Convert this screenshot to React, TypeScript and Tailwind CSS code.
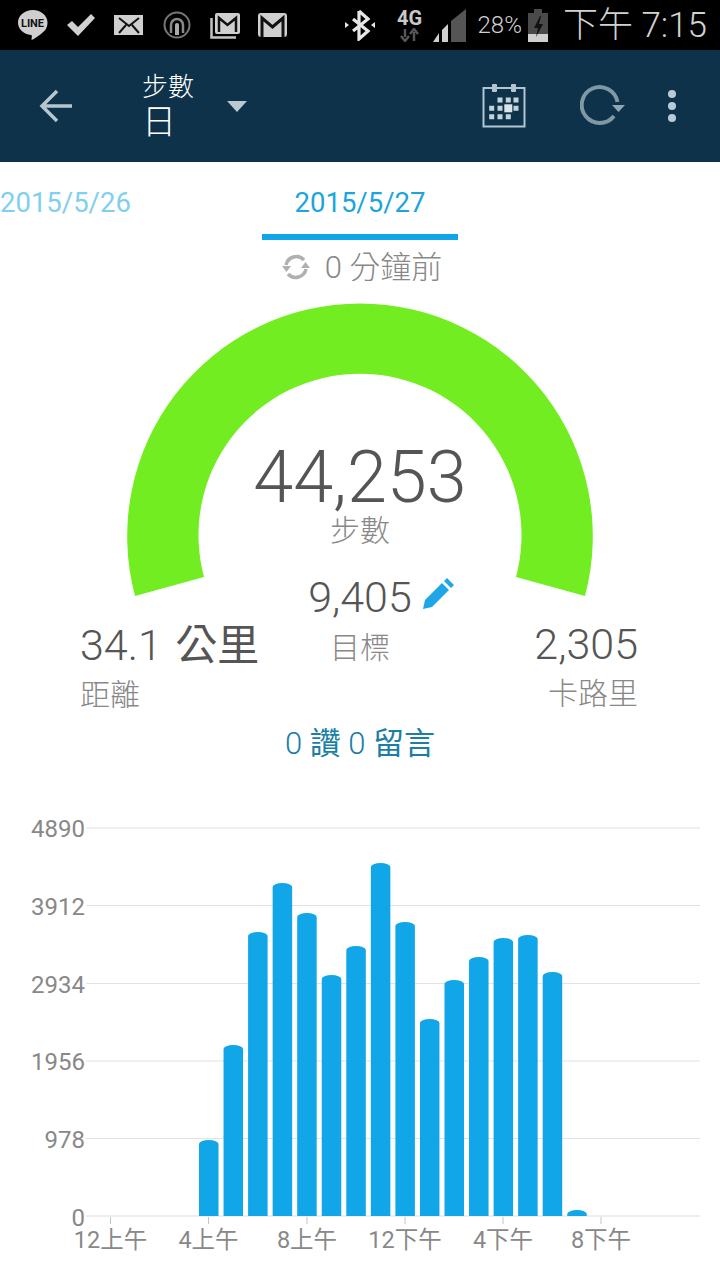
const hourly = [
  { hour: 4, top: 1140 },
  { hour: 5, top: 1045 },
  { hour: 6, top: 932 },
  { hour: 7, top: 883 },
  { hour: 8, top: 913 },
  { hour: 9, top: 975 },
  { hour: 10, top: 946 },
  { hour: 11, top: 863 },
  { hour: 12, top: 922 },
  { hour: 13, top: 1019 },
  { hour: 14, top: 980 },
  { hour: 15, top: 957 },
  { hour: 16, top: 938 },
  { hour: 17, top: 935 },
  { hour: 18, top: 972 },
  { hour: 19, top: 1210 },
]

const yLabels = [
  { text: "4890", y: 828 },
  { text: "3912", y: 905.5 },
  { text: "2934", y: 983.5 },
  { text: "1956", y: 1061 },
  { text: "978", y: 1138.5 },
]

const xLabels = [
  { text: "12上午", x: 110.5 },
  { text: "4上午", x: 208.5 },
  { text: "8上午", x: 307 },
  { text: "12下午", x: 405 },
  { text: "4下午", x: 503 },
  { text: "8下午", x: 601 },
]

const StatusIcons = () => (
  <div className="flex items-center">
    <svg width="32" height="32" viewBox="0 0 32 32" className="ml-[17px]">
      <path d="M16 1C7.5 1 1 6.6 1 13.6c0 6.6 5.8 11.7 13 12.5 1 .2.9 1 .8 2l-.3 3c2.8-1.4 11.5-7 14-10.4 1.2-1.8 2-4.400 2-7.100C30.500 6.600 24 1 16 1z" fill="#cfcfcf" />
      <text x="15.500" y="17.500" textAnchor="middle" fontSize="11" fontWeight="700" fill="#111">LINE</text>
    </svg>
    <svg width="32" height="26" viewBox="0 0 32 26" className="ml-[16px]">
      <path d="M2 13l5-4 6 6L26 2l4 4-17 18z" fill="#d0d0d0" />
    </svg>
    <svg width="30" height="21" viewBox="0 0 30 21" className="ml-[17px]">
      <rect width="29" height="20" fill="#cfcfcf" />
      <path d="M5 3l10 8 10-8M5 18l7-8M25 18l-7-8" fill="none" stroke="#111" strokeWidth="2" />
    </svg>
    <svg width="28" height="28" viewBox="0 0 28 28" className="ml-[19px]">
      <circle cx="14" cy="14" r="12.500" fill="none" stroke="#777" strokeWidth="2" />
      <path d="M8 22v-8a6 6 0 0112 0v8" fill="none" stroke="#888" strokeWidth="2.500" />
      <path d="M12 24v-10a2 2 0 014 0v10z" fill="#aaa" />
    </svg>
    <svg width="31" height="27" viewBox="0 0 31 27" className="ml-[19px]">
      <path d="M1.500 6v19.500H26" fill="none" stroke="#c4c4c4" strokeWidth="2.500" />
      <rect x="5" y="1" width="25" height="21" rx="2" fill="#cfcfcf" />
      <path d="M9 20V6l8.500 7L26 6v14" fill="none" stroke="#111" strokeWidth="2.500" />
    </svg>
    <svg width="29" height="24" viewBox="0 0 29 24" className="ml-[17px]">
      <rect width="29" height="24" rx="3" fill="#cfcfcf" />
      <path d="M4 24V5l10.500 9L25 5v19" fill="none" stroke="#111" strokeWidth="3" />
    </svg>
  </div>
)

const StatusRight = () => (
  <div className="flex items-center">
    <svg width="32" height="32" viewBox="0 0 32 32">
      <path d="M15 2v28l9-8-15-12M15 2l9 8-15 12" fill="none" stroke="#e6e6e6" strokeWidth="3.200" />
      <path d="M1 13l4 3-4 3zM31 13l-4 3 4 3z" fill="#e6e6e6" />
    </svg>
    <div className="ml-[20px] flex w-[28px] flex-col items-center">
      <span className="text-[20px] leading-[20px] font-bold text-[#c8c8c8]">4G</span>
      <svg width="20" height="14" viewBox="0 0 20 14">
        <path d="M5 1v8M1 8l4 5 4-5" fill="none" stroke="#555" strokeWidth="2.500" />
        <path d="M14 13V4M10 6l4-5 4 5" fill="none" stroke="#555" strokeWidth="2.500" />
      </svg>
    </div>
    <svg width="33" height="33" viewBox="0 0 33 33" className="ml-[9px]">
      <path d="M33 0v33H18V12z" fill="#555" />
      <path d="M15 15v18H9V21z" fill="#cfcfcf" />
      <path d="M6 24v9H0z" fill="#cfcfcf" />
    </svg>
    <span className="ml-[12px] text-[24px] leading-none font-light text-[#cfcfcf]">28%</span>
    <svg width="20" height="33" viewBox="0 0 20 33" className="ml-[6px]">
      <path d="M6 0h8v4h6v29H0V4h6z" fill="#4a4a4a" />
      <path d="M0 25h20v8H0z" fill="#cfcfcf" />
      <path d="M12 7l-6 12h4l-2 9 7-13h-4l2-8z" fill="#111" />
    </svg>
    <span className="ml-[15px] mr-[13px] text-[35px] leading-none font-light whitespace-nowrap text-[#d2d2d2]">下午 7:15</span>
  </div>
)

const HeaderBar = () => (
  <div className="flex h-[112px] items-center bg-[#0d3249]">
    <svg width="34" height="34" viewBox="0 0 34 34" className="ml-[39px]">
      <path d="M33 17H3M18 2L3 17l15 15" fill="none" stroke="#b5c6d0" strokeWidth="3.500" />
    </svg>
    <div className="ml-[69px] flex w-[62px] flex-col text-white">
      <span className="text-[26px] leading-[32px] font-light">步數</span>
      <span className="text-[34px] leading-[38px] font-light">日</span>
    </div>
    <svg width="20" height="11" viewBox="0 0 20 11" className="ml-[23px]">
      <path d="M0 0h20L10 11z" fill="#b9c8d1" />
    </svg>
    <svg width="44" height="44" viewBox="0 0 44 44" className="ml-auto">
      <rect x="1.500" y="4" width="41" height="38.500" fill="none" stroke="#b4c5cf" strokeWidth="2" />
      <rect x="10" y="0" width="5" height="8" rx="1" fill="#b4c5cf" />
      <rect x="29" y="0" width="5" height="8" rx="1" fill="#b4c5cf" />
      <path d="M15.500 13.500h5v5h-5zM23.800 13.500h5v5h-5zM31.500 13.500h5v5h-5zM7.200 21.800h5v5h-5zM15.500 21.800h5v5h-5zM31.500 21.800h5v5h-5zM7.200 30.200h5v5h-5zM15.500 30.200h5v5h-5zM23.800 30.200h5v5h-5z" fill="#c3d3dc" />
      <rect x="22.300" y="20.300" width="8" height="8" fill="#dbe5ea" />
    </svg>
    <svg width="46" height="44" viewBox="0 0 46 44" className="ml-[54px]">
      <path d="M34 32A18 18 0 1 1 37.500 18" fill="none" stroke="#7f98a6" strokeWidth="4" />
      <path d="M32 21h13l-6.500 7z" fill="#8ea5b2" />
    </svg>
    <div className="mr-[44px] ml-[42px] flex flex-col gap-[4px]">
      <span className="size-[8px] rounded-full bg-[#b9cbd6]" />
      <span className="size-[8px] rounded-full bg-[#b9cbd6]" />
      <span className="size-[8px] rounded-full bg-[#b9cbd6]" />
    </div>
  </div>
)

const DateTabs = () => (
  <div className="flex h-[78px] text-[27.5px]">
    <div className="w-[262px] pt-[23px] leading-[36px] text-[#7fd0ee]">2015/5/26</div>
    <div className="w-[196px] border-b-[6px] border-[#10a5e8] pt-[23px] text-center leading-[36px] text-[#1ca5dc]">2015/5/27</div>
  </div>
)

const SyncStatus = () => (
  <div className="flex h-[54px] items-center justify-center pl-[4px] text-[31px] font-light text-[#888]">
    <svg width="28" height="28" viewBox="0 0 28 28" className="mr-[15px]">
      <path d="M4 12a10.500 10.500 0 0118-5M24 16a10.500 10.500 0 01-18 5" fill="none" stroke="#b0b0b0" strokeWidth="3.500" />
      <path d="M0 13h9l-4.500 6zM19 15h9l-4.500-6z" fill="#b0b0b0" />
    </svg>
    <span className="pt-[2px]">0 分鐘前</span>
  </div>
)

const Gauge = () => (
  <svg width="464" height="294" viewBox="0 0 464 294" className="absolute top-[9px] left-[128px] overflow-visible">
    <path d="M7 293A232.800 232.800 0 1 1 457 293L388 274A161.500 161.500 0 1 0 76 274Z" fill="#72ed22" />
  </svg>
)

const Summary = () => (
  <div className="relative h-[508px]">
    <Gauge />
    <div className="relative flex flex-col items-center pt-[142px]">
      <div className="text-[72px] leading-[84px] font-light text-[#555]">44,253</div>
      <div className="mt-[-7px] text-[30px] leading-[36px] font-light text-[#888]">步數</div>
    </div>
    <div className="relative mt-[23px] grid grid-cols-[1fr_auto_1fr] px-[80px]">
      <div className="pt-[49px]">
        <div className="text-[43px] leading-[48px] font-light whitespace-nowrap text-[#555]">
          34.1 <span className="ml-[3px] text-[42px] font-normal">公里</span>
        </div>
        <div className="text-[30px] leading-[50px] font-light text-[#888]">距離</div>
      </div>
      <div className="flex flex-col items-center">
        <div className="relative text-[43px] leading-[50px] font-light text-[#555]">
          9,405
          <svg width="32" height="32" viewBox="0 0 32 32" className="absolute top-[6px] left-[calc(100%+10px)]">
            <path d="M1 31l2-9L20 5l7 7L10 29zM22 3l3-3 7 7-3 3z" fill="#1da7e6" />
          </svg>
        </div>
        <div className="text-[30px] leading-[51px] font-light text-[#888]">目標</div>
      </div>
      <div className="pt-[48px] pr-[2px] text-right">
        <div className="text-[43px] leading-[49px] font-light whitespace-nowrap text-[#555]">2,305</div>
        <div className="text-[30px] leading-[50px] font-light text-[#888]">卡路里</div>
      </div>
    </div>
    <div className="pt-[2px] text-center text-[31px] leading-[44px] font-light text-[#1b7ea6]">
      0 <span className="font-normal">讚</span> 0 <span className="font-normal">留言</span>
    </div>
  </div>
)

const Chart = () => (
  <svg width="720" height="478" viewBox="0 802 720 478" className="block">
    {yLabels.map(l => (
      <g key={l.text}>
        <line x1="86" x2="700" y1={l.y} y2={l.y} stroke="#e2e2e2" strokeWidth="1.200" />
        <text x="85" y={l.y + 9} textAnchor="end" fontSize="24" fill="#888">{l.text}</text>
      </g>
    ))}
    <line x1="86" x2="700" y1="1216" y2="1216" stroke="#eeeeee" strokeWidth="2" />
    <text x="85" y="1226" textAnchor="end" fontSize="24" fill="#888">0</text>
    {hourly.map(b => {
      const x = 208.5 + (b.hour - 4) * 24.55 - 9.5
      return (
        <path
          key={b.hour}
          d={`M${x} 1216V${b.top + 4}A9.750 4 0 0 1 ${x + 19.5} ${b.top + 4}V1216Z`}
          fill="#10a6e8"
        />
      )
    })}
    {xLabels.map(l => (
      <g key={l.text}>
        <line x1={l.x} x2={l.x} y1="1217" y2="1224" stroke="#c4c4c4" />
        <text x={l.x} y="1248" textAnchor="middle" fontSize="23.500" fill="#888">{l.text}</text>
      </g>
    ))}
  </svg>
)

export default function App() {
  return (
    <div className="h-[1280px] w-[720px] overflow-hidden bg-white font-[Roboto,'Noto_Sans_CJK_TC',sans-serif]">
      <div className="flex h-[50px] items-center justify-between bg-black">
        <StatusIcons />
        <StatusRight />
      </div>
      <HeaderBar />
      <DateTabs />
      <SyncStatus />
      <Summary />
      <Chart />
    </div>
  )
}
